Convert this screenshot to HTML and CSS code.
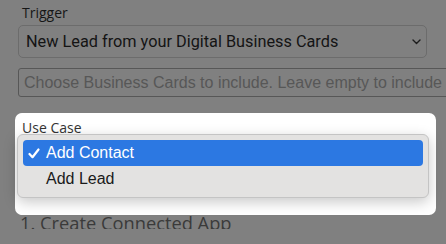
FILE: index.html
```html
<!DOCTYPE html>
<html lang="en">
<head>
    <meta charset="UTF-8">
    <meta name="viewport" content="width=device-width, initial-scale=1.0">
    <title>Trigger Setup</title>
    <link rel="stylesheet" href="styles.css">
</head>
<body>
    <div class="page">
        <label class="field-label">Trigger</label>
        <div class="select">
            <span>New Lead from your Digital Business Cards</span>
            <svg class="chevron" width="9" height="6" viewBox="0 0 9 6">
                <polyline points="1,1 4.5,4.5 8,1" fill="none" stroke="#1c1c1c" stroke-width="1.4" stroke-linecap="round" stroke-linejoin="round"/>
            </svg>
        </div>
        <input class="cards-input" type="text" placeholder="Choose Business Cards to include. Leave empty to include all">

        <div class="spotlight">
            <label class="field-label light">Use Case</label>
            <ul class="menu">
                <li class="menu-item selected">
                    <span class="check">
                        <svg width="12" height="11" viewBox="0 0 12 11">
                            <polyline points="1.5,6 4.5,9.2 10.5,1.5" fill="none" stroke="#fff" stroke-width="2.2" stroke-linecap="round" stroke-linejoin="round"/>
                        </svg>
                    </span>
                    Add Contact
                </li>
                <li class="menu-item">
                    <span class="check"></span>
                    Add Lead
                </li>
            </ul>
        </div>

        <h3 class="step">1. Create Connected App</h3>
    </div>
</body>
</html>
```

FILE: styles.css
```css
body {
    margin: 0;
    background-color: #808080;
    font-family: "Open Sans", Arial, sans-serif;
    overflow: hidden;
}

.page {
    padding: 4px 0 0 18px;
}

.field-label {
    display: block;
    margin-left: 4px;
    font-size: 14px;
    line-height: 18px;
    color: #161616;
}

.field-label.light {
    color: #333;
}

.select {
    box-sizing: border-box;
    display: flex;
    align-items: center;
    justify-content: space-between;
    width: 409px;
    height: 33px;
    margin-top: 3px;
    padding: 0 5px 0 7px;
    border: 1px solid #6c6c6c;
    border-radius: 5px;
    font-family: Roboto, Arial, sans-serif;
    font-size: 16.3px;
    color: #141414;
}

.cards-input {
    box-sizing: border-box;
    display: block;
    width: 440px;
    height: 29px;
    margin-top: 10px;
    padding: 0 5px;
    background-color: transparent;
    border: 1px solid #575757;
    border-radius: 3px;
    font-family: "Liberation Sans", Arial, sans-serif;
    font-size: 16px;
}

.cards-input::placeholder {
    color: #575757;
}

.spotlight {
    position: relative;
    z-index: 1;
    box-sizing: border-box;
    width: 421px;
    height: 102px;
    margin: 16px 0 0 -3px;
    padding: 6px 0 0 3px;
    background-color: #fff;
    border-radius: 7px;
}

.menu {
    position: absolute;
    left: 2px;
    top: 21px;
    box-sizing: border-box;
    width: 412px;
    margin: 0;
    padding: 5px;
    list-style: none;
    background-color: #e3e2e1;
    border: 1px solid #c4c4c4;
    border-radius: 6px;
    box-shadow: 0 4px 14px rgba(0, 0, 0, 0.22);
    font-family: "Liberation Sans", Arial, sans-serif;
    font-size: 16px;
    color: #1a1a1a;
}

.menu-item {
    display: flex;
    align-items: center;
    height: 26px;
    border-radius: 4px;
}

.menu-item.selected {
    background-color: #2c78e2;
    color: #fff;
}

.check {
    display: flex;
    align-items: center;
    width: 23px;
    padding-left: 5px;
    box-sizing: border-box;
}

.step {
    margin: 2px 0 0 2px;
    font-size: 18.3px;
    font-weight: 400;
    line-height: 12px;
    color: #3a3a3a;
}
```
